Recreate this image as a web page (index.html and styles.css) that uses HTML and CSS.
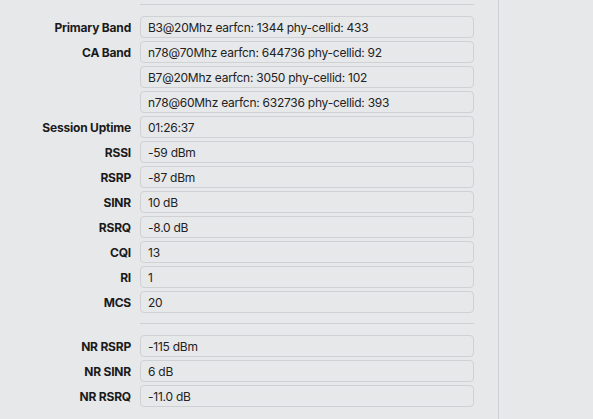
FILE: index.html
```html
<!DOCTYPE html>
<html>
<head>
<meta charset="utf-8">
<link rel="stylesheet" href="styles.css">
</head>
<body>
<div class="page">
  <div class="main">
    <div class="rule rule-top"></div>
    <div class="row"><div class="label">Primary Band</div><div class="field">B3@20Mhz earfcn: 1344 phy-cellid: 433</div></div>
    <div class="row"><div class="label">CA Band</div><div class="field">n78@70Mhz earfcn: 644736 phy-cellid: 92</div></div>
    <div class="row"><div class="label"></div><div class="field">B7@20Mhz earfcn: 3050 phy-cellid: 102</div></div>
    <div class="row"><div class="label"></div><div class="field">n78@60Mhz earfcn: 632736 phy-cellid: 393</div></div>
    <div class="row"><div class="label">Session Uptime</div><div class="field">01:26:37</div></div>
    <div class="row"><div class="label">RSSI</div><div class="field">-59 dBm</div></div>
    <div class="row"><div class="label">RSRP</div><div class="field">-87 dBm</div></div>
    <div class="row"><div class="label">SINR</div><div class="field">10 dB</div></div>
    <div class="row"><div class="label">RSRQ</div><div class="field">-8.0 dB</div></div>
    <div class="row"><div class="label">CQI</div><div class="field">13</div></div>
    <div class="row"><div class="label">RI</div><div class="field">1</div></div>
    <div class="row"><div class="label">MCS</div><div class="field">20</div></div>
    <div class="rule rule-mid"></div>
    <div class="row"><div class="label">NR RSRP</div><div class="field">-115 dBm</div></div>
    <div class="row"><div class="label">NR SINR</div><div class="field">6 dB</div></div>
    <div class="row"><div class="label">NR RSRQ</div><div class="field">-11.0 dB</div></div>
  </div>
  <div class="side"></div>
</div>
</body>
</html>
```
FILE: styles.css
```css
html, body {
  margin: 0;
  padding: 0;
  background: #e7e8ea;
  height: 100%;
  overflow: hidden;
}
body {
  font-family: Inter, "Noto Sans", sans-serif;
  color: #1f1f1f;
}
.page {
  display: flex;
  height: 419px;
}
.main {
  width: 498px;
  box-sizing: border-box;
  padding-top: 4px;
  display: flex;
  flex-direction: column;
}
.side {
  flex: 1;
  border-left: 1px solid #cfd0d3;
}
.rule {
  height: 1px;
  background: #cfd0d3;
  margin-left: 140px;
  width: 334px;
}
.rule-top {
  margin-bottom: 11px;
}
.rule-mid {
  margin-top: 7px;
  margin-bottom: 11px;
}
.row {
  display: flex;
  align-items: center;
  height: 22px;
  margin-bottom: 3px;
}
.label {
  width: 131px;
  margin-right: 9px;
  text-align: right;
  font-size: 12px;
  font-weight: 650;
  letter-spacing: -0.2px;
  color: #1a1a1a;
}
.field {
  width: 334px;
  height: 22px;
  box-sizing: border-box;
  border: 1px solid #d0d1d4;
  border-radius: 4px;
  padding: 0 7px;
  display: flex;
  align-items: center;
  font-size: 12px;
  color: #222;
  letter-spacing: -0.25px;
}
```
